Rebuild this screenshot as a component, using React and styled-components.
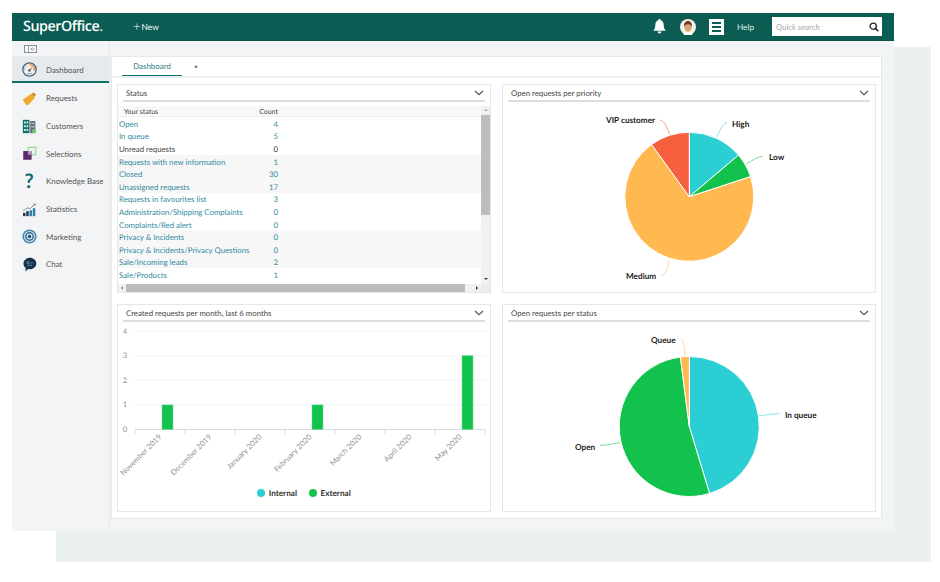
import React from 'react';
import styled, { createGlobalStyle } from 'styled-components';

const statusRows = [
  ['Open', 4, true], ['In queue', 5, true], ['Unread requests', 0, false],
  ['Requests with new information', 1, true], ['Closed', 30, true], ['Unassigned requests', 17, true],
  ['Requests in favourites list', 3, true], ['Administration/Shipping Complaints', 0, true], ['Complaints/Red alert', 0, true],
  ['Privacy & Incidents', 0, true], ['Privacy & Incidents/Privacy Questions', 0, true], ['Sale/Incoming leads', 2, true],
  ['Sale/Products', 1, true],
];

const navItems = [
  ['Dashboard', GaugeIcon], ['Requests', TicketIcon], ['Customers', BuildingIcon], ['Selections', SelectionIcon],
  ['Knowledge Base', QuestionIcon], ['Statistics', StatsIcon], ['Marketing', TargetIcon], ['Chat', ChatIcon],
];

const months = ['November 2019', 'December 2019', 'January 2020', 'February 2020', 'March 2020', 'April 2020', 'May 2020'];
const bars = { 0: 1, 3: 1, 6: 3 };

function slicePath(cx, cy, r, from, to) {
  const pt = (a) => {
    const rad = (a * Math.PI) / 180;
    return `${(cx + r * Math.sin(rad)).toFixed(2)} ${(cy - r * Math.cos(rad)).toFixed(2)}`;
  };
  return `M${cx} ${cy} L${pt(from)} A${r} ${r} 0 ${to - from > 180 ? 1 : 0} 1 ${pt(to)} Z`;
}

function GaugeIcon() {
  return (
    <svg viewBox="0 0 18 18">
      <circle cx="9" cy="9" r="8" fill="#eef1f3" stroke="#48657c" strokeWidth="1.600" />
      <path d="M9 3.200a5.800 5.800 0 0 1 5.600 7.300" fill="none" stroke="#ee8a35" strokeWidth="1.500" />
      <path d="M3.600 11a5.800 5.800 0 0 1 3-7.200" fill="none" stroke="#b9c4cc" strokeWidth="1.200" />
      <path d="M7.900 9.300 12.800 5.200 10 10.800z" fill="#e8792f" />
      <circle cx="8.800" cy="10.200" r="1.500" fill="#48657c" />
      <path d="M6 14h6" stroke="#9aa7b1" strokeWidth="1.200" />
    </svg>
  );
}

function TicketIcon() {
  return (
    <svg viewBox="0 0 18 18">
      <path d="M.8 10.800 10.600 3.400c.7.700 1.500.6 2-.1l.9-1.500 3 2.600-1.100 1.500c-.5.700-.4 1.500.3 2L7.200 17c-.5-.7-1.400-.8-2-.2C3.800 15 2.300 12.800.8 10.800z" fill="#eeaa2c" />
      <path d="M13.500 1.800 16.500 4.400 15.400 5.900 12.400 3.300z" fill="#b9762a" />
    </svg>
  );
}

function BuildingIcon() {
  return (
    <svg viewBox="0 0 18 18">
      <rect x="1" y="1" width="8" height="16" fill="#10706d" />
      <rect x="10" y="2.500" width="6" height="14.500" fill="#5d6a70" />
      <path d="M2.500 3h2v2.400h-2zM5.500 3h2v2.400h-2zM2.500 7.500h2v2.400h-2zM5.500 7.500h2v2.400h-2zM2.500 12h2v2.400h-2zM5.500 12h2v2.400h-2zM11.500 4.500h1.200v1.800h-1.200zM13.500 4.500h1.200v1.800h-1.200zM11.500 8.500h1.200v1.800h-1.200zM13.500 8.500h1.200v1.800h-1.200z" fill="#e6f0ef" />
      <circle cx="14.500" cy="14.500" r="2.600" fill="#6cca72" />
    </svg>
  );
}

function SelectionIcon() {
  return (
    <svg viewBox="0 0 18 18">
      <rect x="7.500" y="1.500" width="9" height="9" fill="#eef5ee" stroke="#9bd79b" strokeWidth="1.500" />
      <rect x="1.500" y="6" width="10" height="10.500" fill="#5b2a6e" />
      <rect x="7" y="6" width="4.500" height="4.500" fill="#b09abb" />
    </svg>
  );
}

function QuestionIcon() {
  return <QuestionMark>?</QuestionMark>;
}

function StatsIcon() {
  return (
    <svg viewBox="0 0 18 18">
      <path d="M1.500 10.500 7 7l3 1 5-5" fill="none" stroke="#7b868e" strokeWidth="1.100" />
      <path d="M16.500 1.800 16 5l-2.800-2.500z" fill="#7b868e" />
      <rect x="1.200" y="13" width="3" height="4" fill="#26394a" />
      <rect x="5.100" y="11" width="3" height="6" fill="#26394a" />
      <rect x="9" y="10" width="3" height="7" fill="#2a7fb0" />
      <rect x="12.900" y="7.500" width="3" height="9.500" fill="#2a7fb0" />
    </svg>
  );
}

function TargetIcon() {
  return (
    <svg viewBox="0 0 18 18">
      <circle cx="9" cy="9" r="8.500" fill="#4a88ad" />
      <circle cx="9" cy="9" r="6.600" fill="#cfe0ea" />
      <circle cx="9" cy="9" r="5.300" fill="#2f6f96" />
      <circle cx="9" cy="9" r="3.600" fill="#d9e6ee" />
      <circle cx="9" cy="9" r="2" fill="#1d4f73" />
    </svg>
  );
}

function ChatIcon() {
  return (
    <svg viewBox="0 0 18 18">
      <path d="M9.500.8c4.200 0 7.700 3 7.700 6.900s-3.500 6.900-7.700 6.900c-.7 0-1.400-.1-2-.2L4 17.500l.6-4.200C2.900 12 1.800 10 1.800 7.700 1.800 3.800 5.300.8 9.500.8z" fill="#13334f" />
      <path d="M6 5.500h2.500v2.500H6zM6 10h6M10 7h3" fill="none" stroke="#6c8ca3" strokeWidth="1" />
    </svg>
  );
}

function Chevron() {
  return (
    <svg width="10" height="6" viewBox="0 0 10 6">
      <path d="M1 1l4 3.600L9 1" fill="none" stroke="#555" strokeWidth="1.200" />
    </svg>
  );
}

function Widget({ title, children }) {
  return (
    <Card>
      <CardHead>
        <CardTitle>{title}</CardTitle>
        <Chevron />
      </CardHead>
      {children}
    </Card>
  );
}

function Pie({ viewBox, cx, cy, r, slices, labels }) {
  return (
    <ChartSvg viewBox={viewBox}>
      {labels.map((l) => (
        <path key={l.text} d={l.line} fill="none" stroke={l.color} strokeWidth="1" opacity=".55" />
      ))}
      {slices.map(([from, to, color]) => (
        <path key={color} d={slicePath(cx, cy, r, from, to)} fill={color} stroke="#fff" strokeWidth="1" />
      ))}
      {labels.map((l) => (
        <PieLabel key={l.text} x={l.x} y={l.y}>{l.text}</PieLabel>
      ))}
    </ChartSvg>
  );
}

function StatusTable() {
  return (
    <TableFrame>
      <TableMain>
        <HeadRow>
          <HeadName>Your status</HeadName>
          <HeadCount>Count</HeadCount>
        </HeadRow>
        {statusRows.map(([name, count, link], i) => (
          <Row key={name} $shaded={Math.floor(i / 3) % 2 === 1}>
            <RowName $link={link}>{name}</RowName>
            <RowCount $link={link}>{count}</RowCount>
          </Row>
        ))}
      </TableMain>
      <VTrack>
        <Arrow $up />
        <VThumb />
        <Arrow />
      </VTrack>
      <HTrack>
        <SideArrow $left />
        <HThumb />
        <SideArrow />
      </HTrack>
      <Corner />
    </TableFrame>
  );
}

function BarChart() {
  const y = (v) => 429 - v * 24.6;
  return (
    <ChartSvg viewBox="118 322 372 163">
      {[1, 2, 3, 4].map((v) => (
        <line key={v} x1="135" x2="485" y1={y(v)} y2={y(v)} stroke="#f0f2f3" />
      ))}
      {[0, 1, 2, 3, 4].map((v) => (
        <AxisText key={v} x="125" y={y(v) + 2.500} textAnchor="middle">{v}</AxisText>
      ))}
      <line x1="135" x2="485" y1="429" y2="429" stroke="#d5dde8" />
      {months.map((m, i) => (
        <g key={m}>
          <line x1={135 + i * 50} x2={135 + i * 50} y1="429" y2="434" stroke="#d5dde8" />
          <AxisText x={162 + i * 50} y="437" textAnchor="end" transform={`rotate(-45 ${162 + i * 50} 437)`}>{m}</AxisText>
          {bars[i] && <rect x={162 + i * 50} y={y(bars[i])} width="11" height={429 - y(bars[i])} fill="#12c24d" stroke="#6fdc93" strokeWidth=".5" />}
        </g>
      ))}
      <line x1="485" x2="485" y1="429" y2="434" stroke="#d5dde8" />
    </ChartSvg>
  );
}

export default function App() {
  return (
    <Page>
      <GlobalStyle />
      <Backdrop />
      <Window>
        <TopBar>
          <Logo>SuperOffice<LogoDot>.</LogoDot></Logo>
          <NewButton><Plus>+</Plus>New</NewButton>
          <TopRight>
            <Bell viewBox="0 0 14 16">
              <path d="M7 0c.8 0 1.300.6 1.300 1.300C10.600 2 11.500 4 11.500 6.500c0 3 .8 4.500 2.200 6H.3c1.400-1.500 2.200-3 2.200-6 0-2.500.9-4.500 3.200-5.200C5.700.6 6.200 0 7 0zM5 13.500h4a2 2 0 0 1-4 0z" fill="#fff" />
            </Bell>
            <Avatar viewBox="0 0 16 16">
              <circle cx="8" cy="8" r="8" fill="#f4efe9" />
              <path d="M3.500 16c.2-3 2-4 4.500-4s4.300 1 4.500 4z" fill="#fff" />
              <ellipse cx="8" cy="8.300" rx="3.600" ry="4.600" fill="#d9a27c" />
              <path d="M4 8.500C3.500 3.500 6 2 8 2s4.500 1.500 4 6.500c-.3-2-1.200-3.300-4-3.300S4.300 6.500 4 8.500z" fill="#6a3d24" />
            </Avatar>
            <NotesBox>
              <NoteBar /><NoteBar /><NoteBar />
            </NotesBox>
            <HelpLink>Help</HelpLink>
            <SearchBox>
              <SearchHint>Quick search</SearchHint>
              <svg width="10" height="10" viewBox="0 0 10 10">
                <circle cx="4.200" cy="4.200" r="3.100" fill="none" stroke="#222" strokeWidth="1.300" />
                <path d="M6.500 6.500 9.300 9.300" stroke="#222" strokeWidth="1.600" />
              </svg>
            </SearchBox>
          </TopRight>
        </TopBar>
        <Body>
          <Sidebar>
            <CollapseBar>
              <svg width="13" height="8" viewBox="0 0 13 8">
                <rect x=".5" y=".5" width="12" height="7" fill="#f3f4f6" stroke="#8b9096" />
                <path d="M4.500 1v6M10.500 4H7M8.500 2.500 7 4l1.500 1.500" fill="none" stroke="#8b9096" strokeWidth=".8" />
              </svg>
            </CollapseBar>
            {navItems.map(([label, Icon], i) => (
              <NavItem key={label} $active={i === 0}>
                <NavIcon><Icon /></NavIcon>
                <span>{label}</span>
              </NavItem>
            ))}
          </Sidebar>
          <Main>
            <Tabs>
              <Tab>Dashboard</Tab>
              <AddTab>*</AddTab>
            </Tabs>
            <Grid>
              <Widget title="Status"><StatusTable /></Widget>
              <Widget title="Open requests per priority">
                <Pie
                  viewBox="503 102 372 190"
                  cx={689.300} cy={196.800} r={64.500}
                  slices={[[0, 49.700, '#2bced2'], [49.700, 71.800, '#12c24d'], [71.800, 324.200, '#ffb950'], [324.200, 360, '#f7603e']]}
                  labels={[
                    { text: 'VIP customer', x: 606, y: 123, color: '#f7603e', line: 'M670 135C667 128 665 121 660 120' },
                    { text: 'High', x: 732, y: 127, color: '#2bced2', line: 'M716.500 137C720 131 722 124 727 122.500' },
                    { text: 'Low', x: 769, y: 160, color: '#12c24d', line: 'M746 164C752 161 757 157 763 156' },
                    { text: 'Medium', x: 626, y: 279, color: '#ffb950', line: 'M669 260C668 267 666 275 661.500 275.500' },
                  ]}
                />
              </Widget>
              <Widget title="Created requests per month, last 6 months">
                <BarChart />
                <Legend>
                  <LegendItem $color="#2bced2">Internal</LegendItem>
                  <LegendItem $color="#12c24d">External</LegendItem>
                </Legend>
              </Widget>
              <Widget title="Open requests per status">
                <Pie
                  viewBox="503 322 372 189"
                  cx={689.300} cy={426.500} r={70}
                  slices={[[0, 163.200, '#2bced2'], [163.200, 352.700, '#12c24d'], [352.700, 360, '#ffb950']]}
                  labels={[
                    { text: 'Queue', x: 651, y: 343, color: '#ffb950', line: 'M685 357C685 350 684 340 681 339' },
                    { text: 'In queue', x: 785, y: 417.500, color: '#2bced2', line: 'M759 416C765 415 772 414 779 413.500' },
                    { text: 'Open', x: 575, y: 450, color: '#12c24d', line: 'M620 442.500C613 444 606 445 600 445.500' },
                  ]}
                />
              </Widget>
            </Grid>
          </Main>
        </Body>
      </Window>
    </Page>
  );
}

const GlobalStyle = createGlobalStyle`
  html, body {
    margin: 0;
    padding: 0;
    background: #fff;
    font-family: Lato, "Open Sans", "Liberation Sans", sans-serif;
    text-rendering: geometricPrecision;
  }
  * {
    box-sizing: border-box;
  }
`;

const Page = styled.div`
  position: relative;
  width: 940px;
  height: 582px;
  padding: 13px 46px 0 12px;
  overflow: hidden;
`;

const Backdrop = styled.div`
  position: absolute;
  left: 56px;
  top: 47px;
  width: 875px;
  height: 515px;
  background: #ebf0f0;
`;

const Window = styled.div`
  position: relative;
  display: flex;
  flex-direction: column;
  height: 518px;
  background: #f3f4f6;
`;

const TopBar = styled.header`
  display: flex;
  align-items: center;
  flex: 0 0 28px;
  padding: 0 12px 0 11px;
  background: #0b5c53;
  border-bottom: 1px solid #0a4f48;
  color: #fff;
`;

const Logo = styled.div`
  width: 100px;
  font-family: "Open Sans", sans-serif;
  font-size: 14.300px;
  font-weight: 600;
  letter-spacing: -0.450px;
`;

const LogoDot = styled.span`
  opacity: 0.7;
`;

const NewButton = styled.div`
  display: flex;
  align-items: center;
  gap: 1px;
  margin-left: 10px;
  font-size: 8.400px;
`;

const Plus = styled.span`
  font-size: 13px;
  font-weight: 300;
  line-height: 1;
`;

const TopRight = styled.div`
  display: flex;
  align-items: center;
  margin-left: auto;
`;

const Bell = styled.svg`
  width: 13px;
  height: 15px;
  margin-right: 14px;
`;

const Avatar = styled.svg`
  width: 16px;
  height: 16px;
  margin-right: 13px;
`;

const NotesBox = styled.div`
  display: flex;
  flex-direction: column;
  justify-content: center;
  gap: 2px;
  width: 15px;
  height: 16px;
  padding: 0 3px;
  background: #fff;
`;

const NoteBar = styled.div`
  height: 2px;
  background: #0b5c53;
`;

const HelpLink = styled.span`
  width: 16px;
  margin: 0 19px 0 13px;
  font-size: 8.200px;
  white-space: nowrap;
  color: #dfeeea;
`;

const SearchBox = styled.div`
  display: flex;
  align-items: center;
  justify-content: space-between;
  width: 110px;
  height: 19px;
  padding: 0 3px 0 4px;
  background: #fff;
`;

const SearchHint = styled.span`
  font-size: 8.200px;
  font-style: italic;
  color: #aaa;
`;

const Body = styled.div`
  display: flex;
  flex: 1;
  min-height: 0;
`;

const Sidebar = styled.nav`
  flex: 0 0 98px;
  border-right: 1px solid #e6e9ea;
`;

const CollapseBar = styled.div`
  display: flex;
  align-items: center;
  height: 15px;
  padding-left: 12px;
`;

const NavItem = styled.div`
  display: flex;
  align-items: center;
  gap: 6px;
  height: ${(p) => (p.$active ? '27px' : '27.700px')};
  margin-bottom: ${(p) => (p.$active ? '1px' : '0')};
  padding-left: 7px;
  padding-top: ${(p) => (p.$active ? '2px' : '1px')};
  font-size: 7.900px;
  color: #555;
  background: ${(p) => (p.$active ? '#e6eaed' : 'transparent')};
  border-bottom: ${(p) => (p.$active ? '2px solid #0f7069' : 'none')};
`;

const NavIcon = styled.div`
  display: flex;
  align-items: center;
  justify-content: center;
  width: 20px;
  height: 20px;
  margin-right: 1px;

  svg {
    width: 15px;
    height: 15px;
  }
`;

const QuestionMark = styled.span`
  font-size: 20px;
  font-weight: 700;
  line-height: 1;
  color: #0e6a69;
`;

const Main = styled.main`
  display: flex;
  flex-direction: column;
  width: 771px;
  height: 463px;
  margin: 15px 0 0 1px;
  background: #fff;
  border: 1px solid #e5e8e8;
`;

const Tabs = styled.div`
  display: flex;
  flex: 0 0 21px;
  padding-left: 10px;
  border-bottom: 2px solid #eef0f0;
`;

const Tab = styled.div`
  display: flex;
  align-items: center;
  justify-content: center;
  width: 60px;
  height: 19px;
  font-size: 7.900px;
  color: #2f7f86;
  border-bottom: 1px solid #0f7069;
`;

const AddTab = styled.div`
  margin-left: 12px;
  padding-top: 6px;
  font-size: 9px;
  font-weight: 700;
  color: #444;
`;

const Grid = styled.div`
  display: grid;
  flex: 1;
  grid-template-columns: 374px 374px;
  grid-template-rows: 209px 208px;
  gap: 11px;
  padding: 6px 0 0 5px;
`;

const Card = styled.section`
  display: flex;
  flex-direction: column;
  min-height: 0;
  border: 1px solid #e3e7e7;
`;

const CardHead = styled.div`
  display: flex;
  align-items: center;
  justify-content: space-between;
  flex: 0 0 17px;
  margin: 0 5px;
  padding: 1px 1px 0 3px;
  border-bottom: 2px solid #dcdddd;
`;

const CardTitle = styled.span`
  font-size: 7.800px;
  color: #444;
`;

const TableFrame = styled.div`
  display: grid;
  grid-template-columns: 1fr 9px;
  grid-template-rows: 178px 8px;
  margin-top: 4px;
`;

const TableMain = styled.div`
  overflow: hidden;
`;

const HeadRow = styled.div`
  display: flex;
  align-items: center;
  height: 11px;
  padding: 1px 0 0 6px;
  font-size: 7px;
  color: #444;
  background: #f7f8f8;
  border-bottom: 1px solid #eee;
`;

const HeadName = styled.span`
  width: 135px;
`;

const HeadCount = styled.span`
  width: 19px;
  text-align: right;
`;

const Row = styled.div`
  display: flex;
  align-items: center;
  height: 12.600px;
  padding: 1px 0 0 1px;
  font-size: 7.800px;
  background: ${(p) => (p.$shaded ? '#f7f7f8' : '#fff')};
`;

const RowName = styled.span`
  width: 156px;
  white-space: nowrap;
  color: ${(p) => (p.$link ? '#2f8a9e' : '#444')};
`;

const RowCount = styled.span`
  width: 3px;
  display: flex;
  justify-content: flex-end;
  white-space: nowrap;
  color: ${(p) => (p.$link ? '#2f8a9e' : '#444')};
`;

const VTrack = styled.div`
  display: flex;
  flex-direction: column;
  align-items: center;
  background: #f1f1f1;
`;

const VThumb = styled.div`
  flex: none;
  width: 100%;
  height: 100px;
  margin-bottom: auto;
  background: #bdbdbd;
`;

const Arrow = styled.div`
  flex: none;
  width: 0;
  height: 0;
  margin: 3px 0 4px;
  border-left: 2px solid transparent;
  border-right: 2px solid transparent;
  border-bottom: ${(p) => (p.$up ? '2px solid #aaa' : 'none')};
  border-top: ${(p) => (p.$up ? 'none' : '2px solid #333')};
`;

const HTrack = styled.div`
  display: flex;
  align-items: center;
  background: #f1f1f1;
`;

const HThumb = styled.div`
  flex: 0 0 339px;
  height: 100%;
  margin-right: auto;
  background: #bdbdbd;
`;

const SideArrow = styled.div`
  width: 0;
  height: 0;
  margin: 0 3px;
  border-top: 2px solid transparent;
  border-bottom: 2px solid transparent;
  border-right: ${(p) => (p.$left ? '2px solid #888' : 'none')};
  border-left: ${(p) => (p.$left ? 'none' : '2px solid #333')};
`;

const Corner = styled.div`
  background: #ececec;
`;

const ChartSvg = styled.svg`
  display: block;
  flex: 1;
  min-height: 0;
  width: 100%;
`;

const PieLabel = styled.text`
  font-size: 8.200px;
  font-weight: 700;
  fill: #222;
`;

const AxisText = styled.text`
  font-size: 7.600px;
  fill: #8d9196;
`;

const Legend = styled.div`
  display: flex;
  justify-content: center;
  gap: 12px;
  height: 25px;
  padding-top: 1px;
`;

const LegendItem = styled.div`
  display: flex;
  align-items: center;
  gap: 3.500px;
  height: 12px;
  font-size: 8.200px;
  font-weight: 700;
  color: #333;

  &::before {
    content: '';
    width: 8px;
    height: 8px;
    border-radius: 50%;
    background: ${(p) => p.$color};
  }
`;
